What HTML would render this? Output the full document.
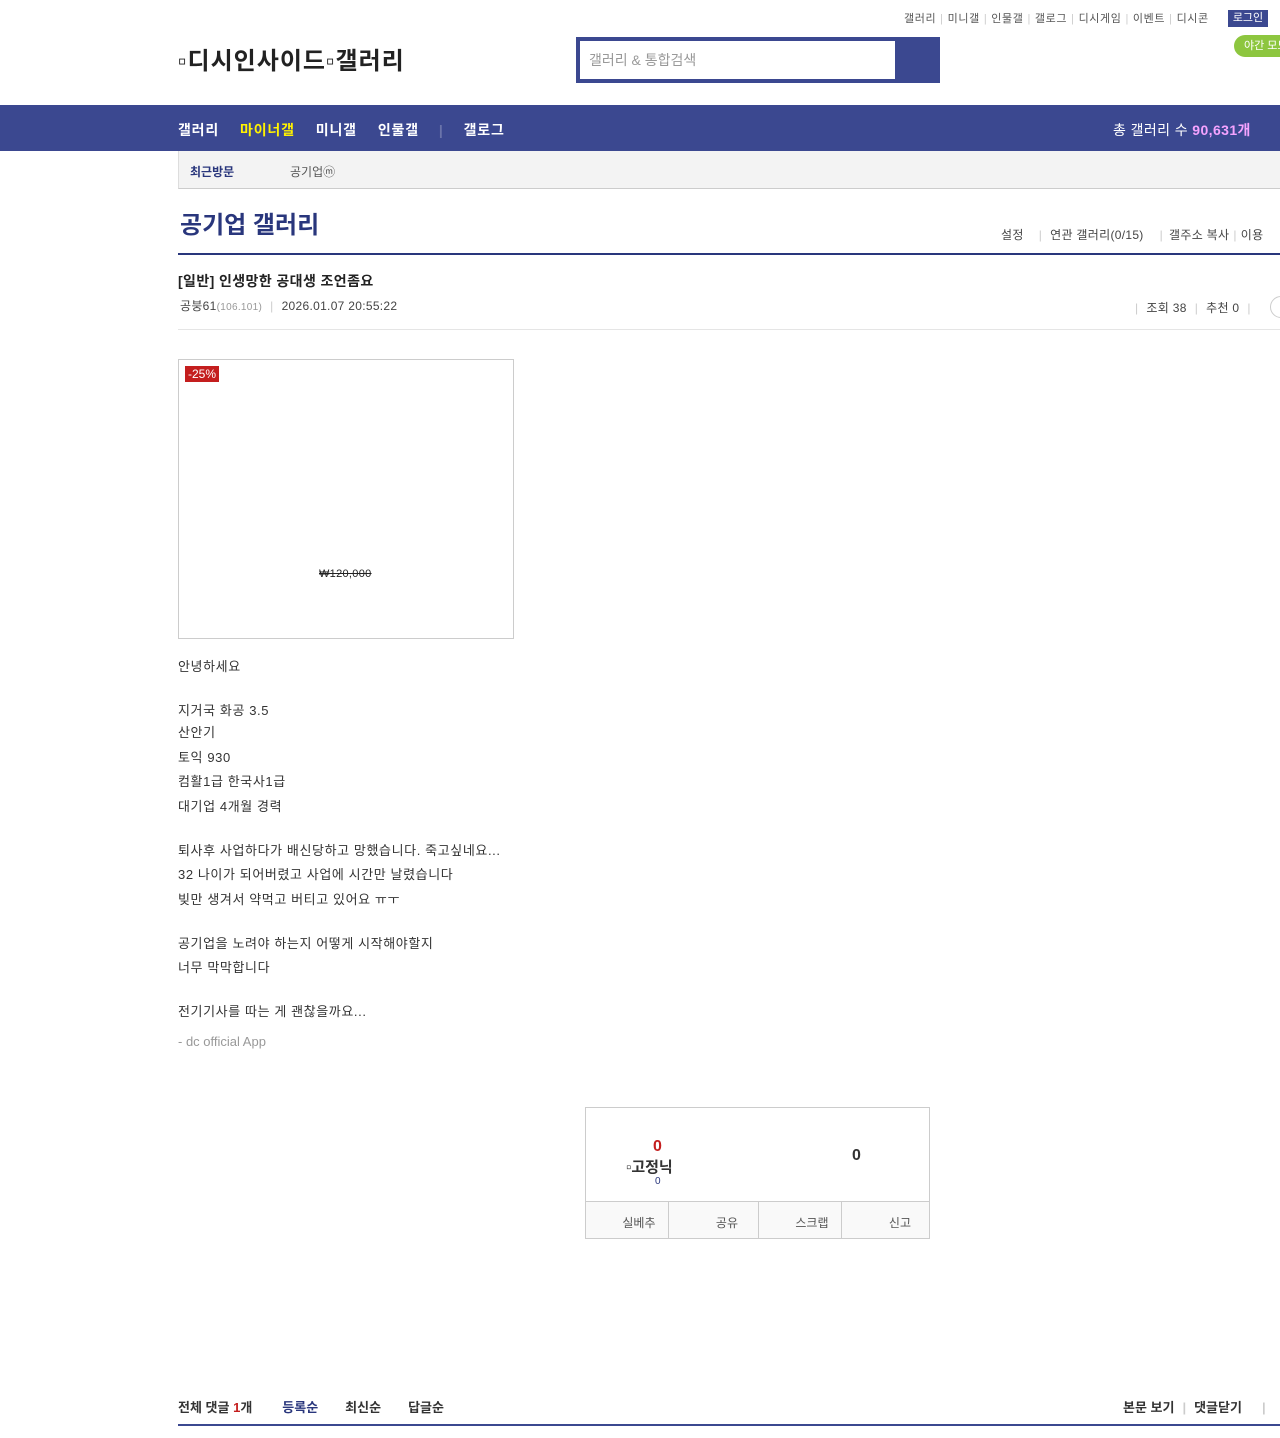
<!DOCTYPE html>
<html><head><meta charset="utf-8"><style>
*{margin:0;padding:0;box-sizing:border-box}
body{width:1280px;height:1438px;position:relative;overflow:hidden;background:#fff;font-family:"Liberation Sans","Noto Sans CJK KR",sans-serif;color:#333}
.a{position:absolute;white-space:nowrap}
.sep{color:#ccc;margin:0 4px}
.t{position:absolute;left:178px;font-size:13px;color:#333;letter-spacing:0.6px;white-space:nowrap;line-height:16px}
</style></head><body>
<div class="a" style="top:10px;left:904px;font-size:11px;color:#555;letter-spacing:0.6px">갤러리<span class="sep">|</span>미니갤<span class="sep">|</span>인물갤<span class="sep">|</span>갤로그<span class="sep">|</span>디시게임<span class="sep">|</span>이벤트<span class="sep">|</span>디시콘</div>
<div class="a" style="top:10px;left:1228px;width:40px;height:17px;background:#3b4890;color:#fff;font-size:11px;text-align:center;line-height:17px">로그인</div>
<div class="a" style="top:35px;left:1234px;width:60px;height:22px;background:#8dc63f;border-radius:11px;color:#fff;font-size:11px;line-height:22px;padding-left:10px">야간 모드</div>
<div class="a" style="top:41px;left:178px;font-size:24px;font-weight:bold;color:#222;letter-spacing:1px">▫디시인사이드▫갤러리</div>
<div class="a" style="top:37px;left:576px;width:364px;height:46px;background:#3b4890"></div>
<div class="a" style="top:41px;left:580px;width:315px;height:38px;background:#fff;font-size:14px;color:#999;line-height:38px;padding-left:9px">갤러리 &amp; 통합검색</div>
<div class="a" style="top:105px;left:0;width:1280px;height:46px;background:#3b4890"></div>
<div class="a" style="top:120px;left:178px;font-size:14px;font-weight:bold;color:#fff;letter-spacing:0.8px">갤러리<span style="color:#fff200;margin-left:21px">마이너갤</span><span style="margin-left:21px">미니갤</span><span style="margin-left:21px">인물갤</span><span style="color:#6a74aa;margin:0 20px">|</span>갤로그</div>
<div class="a" style="top:120px;left:1113px;font-size:14px;color:#fff;letter-spacing:0.4px">총 갤러리 수 <b style="color:#f5a3ff">90,631개</b></div>
<div class="a" style="top:151px;left:178px;width:1102px;height:38px;background:#f3f3f3;border-left:1px solid #ddd;border-bottom:1px solid #ccc"></div>
<div class="a" style="top:163px;left:190px;font-size:12px;font-weight:bold;color:#29367c">최근방문</div>
<div class="a" style="top:163px;left:290px;font-size:12px;color:#555">공기업ⓜ</div>
<div class="a" style="top:205px;left:180px;font-size:24px;font-weight:bold;color:#29367c">공기업 갤러리</div>
<div class="a" style="top:226px;left:1001px;font-size:12px;color:#444;letter-spacing:0.3px">설정<span class="sep" style="margin:0 8px 0 15px">|</span>연관 갤러리(0/15)<span class="sep" style="margin:0 6px 0 16px">|</span>갤주소 복사<span class="sep">|</span>이용</div>
<div class="a" style="top:253px;left:178px;width:1102px;height:2px;background:#29367c"></div>
<div class="a" style="top:271px;left:178px;font-size:14px;font-weight:bold;color:#222;letter-spacing:0.4px">[일반] 인생망한 공대생 조언좀요</div>
<div class="a" style="top:297px;left:180px;font-size:12px;color:#444;letter-spacing:0.3px">공붕61<span style="font-size:10px;color:#999">(106.101)</span><span class="sep" style="margin:0 8px">|</span>2026.01.07 20:55:22</div>
<div class="a" style="top:299px;left:1135px;font-size:12px;color:#444;letter-spacing:0.3px"><span class="sep" style="margin:0 8px 0 0">|</span>조회 38<span class="sep" style="margin:0 8px">|</span>추천 0<span class="sep" style="margin:0 8px">|</span></div>
<div class="a" style="top:296px;left:1270px;width:24px;height:22px;border:1px solid #ccc;border-radius:11px"></div>
<div class="a" style="top:329px;left:178px;width:1102px;height:1px;background:#e5e5e5"></div>
<div class="a" style="top:359px;left:178px;width:336px;height:280px;border:1px solid #ccc"></div>
<div class="a" style="top:366px;left:185px;width:34px;height:16px;background:#c41e1e;color:#fff;font-size:12px;line-height:16px;text-align:center">-25%</div>
<div class="a" style="top:568px;left:319px;font-size:11px;color:#222;text-decoration:line-through;letter-spacing:0.3px">₩120,000</div>
<div class="t" style="top:659px">안녕하세요</div>
<div class="t" style="top:703px">지거국 화공 3.5</div>
<div class="t" style="top:725px">산안기</div>
<div class="t" style="top:750px">토익 930</div>
<div class="t" style="top:774px">컴활1급 한국사1급</div>
<div class="t" style="top:799px">대기업 4개월 경력</div>
<div class="t" style="top:843px">퇴사후 사업하다가 배신당하고 망했습니다. 죽고싶네요...</div>
<div class="t" style="top:867px">32 나이가 되어버렸고 사업에 시간만 날렸습니다</div>
<div class="t" style="top:892px">빚만 생겨서 약먹고 버티고 있어요 ㅠㅜ</div>
<div class="t" style="top:936px">공기업을 노려야 하는지 어떻게 시작해야할지</div>
<div class="t" style="top:960px">너무 막막합니다</div>
<div class="t" style="top:1004px">전기기사를 따는 게 괜찮을까요...</div>
<div class="t" style="top:1034px;color:#999;letter-spacing:0">- dc official App</div>
<div class="a" style="top:1107px;left:585px;width:345px;height:132px;border:1px solid #ccc"></div>
<div class="a" style="top:1138px;left:653px;font-size:16px;font-weight:bold;color:#c41e1e">0</div>
<div class="a" style="top:1156px;left:626px;font-size:15px;font-weight:bold;color:#333">▫고정닉</div>
<div class="a" style="top:1176px;left:655px;font-size:10px;color:#29367c">0</div>
<div class="a" style="top:1147px;left:852px;font-size:16px;font-weight:bold;color:#333">0</div>
<div class="a" style="top:1201px;left:586px;width:343px;height:37px;background:#f9f9f9;border-top:1px solid #ccc;display:flex;font-size:12px;color:#555">
<div style="flex:1;border-right:1px solid #ccc;text-align:right;padding:12px 12px 0 0">실베추</div>
<div style="flex:1;border-right:1px solid #ccc;text-align:right;padding:12px 20px 0 0">공유</div>
<div style="flex:1;border-right:1px solid #ccc;text-align:right;padding:12px 12px 0 0">스크랩</div>
<div style="flex:1;text-align:right;padding:12px 18px 0 0">신고</div></div>
<div class="a" style="top:1397px;left:178px;font-size:13px;font-weight:bold;color:#333">전체 댓글 <span style="color:#c41e1e">1</span>개<span style="color:#29367c;margin-left:30px">등록순</span><span style="margin-left:27px">최신순</span><span style="margin-left:27px">답글순</span></div>
<div class="a" style="top:1397px;left:1123px;font-size:13px;font-weight:bold;color:#333">본문 보기<span class="sep" style="margin:0 8px">|</span>댓글닫기<span class="sep" style="margin:0 10px 0 20px">|</span></div>
<div class="a" style="top:1424px;left:178px;width:1102px;height:2px;background:#3b4890"></div>
</body></html>
